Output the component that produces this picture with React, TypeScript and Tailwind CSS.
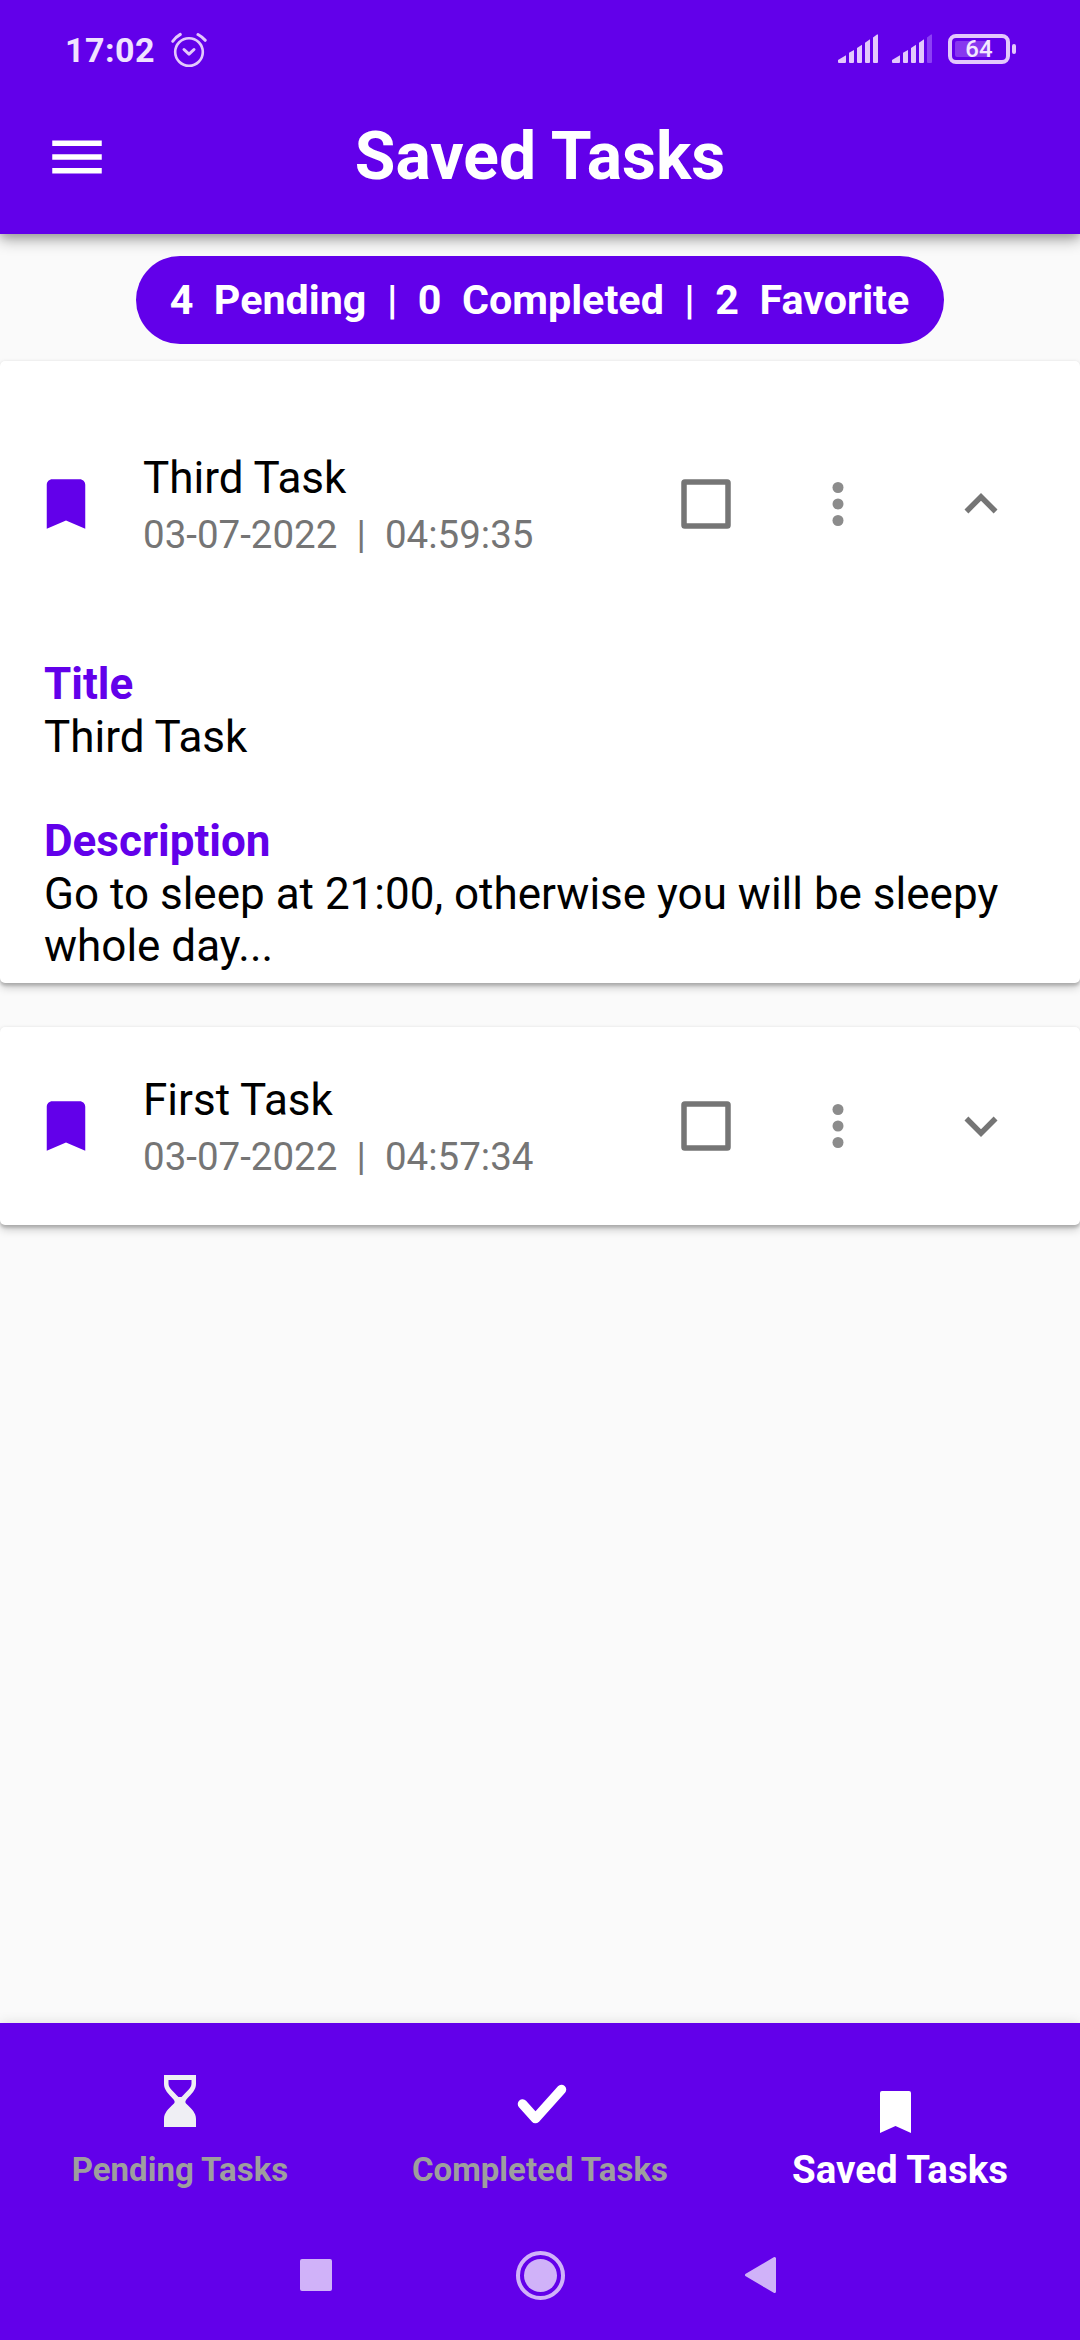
import React from "react";

function AlarmIcon() {
  return (
    <svg className="h-[36px] w-[36px]" viewBox="171 32 36 36" fill="none" stroke="#e3c8fc" strokeLinecap="round">
      <circle cx="189" cy="52" r="13.8" strokeWidth="2.6" />
      <path d="M184 49.5l5 4.7 5-4.7" strokeWidth="3" strokeLinejoin="round" />
      <path d="M172.8 41.3Q175.500 37.200 180.300 34.400M205.200 40.300Q202.500 37 198 34.500" strokeWidth="3" />
    </svg>
  );
}

function SignalIcon({ weak = false }: { weak?: boolean }) {
  return (
    <svg className="h-[29px] w-[40px]" viewBox="0 0 40 30" preserveAspectRatio="none" fill="#e3c8fc">
      <path d="M1 30Q0 30 0 29V27L8 22V29Q8 30 7 30z" />
      <path d="M11 19.500L16 16.500V29Q16 30 15 30H12Q11 30 11 29z" />
      <path d="M19 14.500L24 11V29Q24 30 23 30H20Q19 30 19 29z" />
      <path d="M27 9L32 5.500V29Q32 30 31 30H28Q27 30 27 29z" />
      <path d="M35 3.500L39 .5H40V29Q40 30 39 30H36Q35 30 35 29z" fill={weak ? "#8c40f5" : "#e3c8fc"} />
    </svg>
  );
}

function Battery() {
  return (
    <div className="flex items-center gap-[2px]">
      <div className="relative flex h-[30px] w-[62px] items-center justify-center rounded-[8px] border-[4px] border-[#e3c8fc]">
        <div className="absolute left-[3px] top-[3px] h-[16px] w-[35px] rounded-[2px] bg-[#8837ef]" />
        <span className="relative text-[24px] font-medium leading-none text-[#f3e8ff]">64</span>
      </div>
      <div className="h-[10px] w-[4px] rounded-[2px] bg-[#e3c8fc]" />
    </div>
  );
}

function Bookmark({ className }: { className: string }) {
  return (
    <svg className={className} viewBox="0 0 24 24" fill="currentColor">
      <path d="M17 3H7c-1.100 0-2 .9-2 2v16l7-3 7 3V5c0-1.100-.9-2-2-2z" />
    </svg>
  );
}

function TaskRow({ title, time, open = false }: { title: string; time: string; open?: boolean }) {
  return (
    <div className="flex h-[198px] items-center pl-[33px] pr-[66px]">
      <Bookmark className="h-[66px] w-[66px] text-[#6200ea]" />
      <div className="ml-[44px] flex flex-1 flex-col gap-[8px] whitespace-pre">
        <div className="text-[44px] leading-[52px] text-black">{title}</div>
        <div className="text-[38.500px] leading-[45px] text-[#757575]">{time}</div>
      </div>
      <svg className="h-[66px] w-[66px]" viewBox="0 0 24 24" fill="none" stroke="#757575" strokeWidth="2">
        <rect x="4" y="4" width="16" height="16" rx=".3" strokeLinejoin="round" />
      </svg>
      <svg className="ml-[66px] h-[66px] w-[66px]" viewBox="0 0 24 24" fill="#8c8c8c">
        <circle cx="12" cy="6" r="2" />
        <circle cx="12" cy="12" r="2" />
        <circle cx="12" cy="18" r="2" />
      </svg>
      <svg className="ml-[77px] h-[66px] w-[66px]" viewBox="0 0 24 24" fill="#757575">
        {open ? (
          <path d="M12 8l-6 6 1.410 1.410L12 10.830l4.590 4.580L18 14z" />
        ) : (
          <path d="M16.590 8.590L12 13.170 7.410 8.590 6 10l6 6 6-6z" />
        )}
      </svg>
    </div>
  );
}

const cardClass =
  "rounded-[5px] bg-white shadow-[0_3px_3px_rgba(0,0,0,0.16),0_5px_8px_rgba(0,0,0,0.18),0_0_3px_rgba(0,0,0,0.07)]";

export default function App() {
  return (
    <div className="flex h-[2340px] w-[1080px] flex-col overflow-hidden bg-[#fafafa] font-['Roboto',sans-serif]">
      <header className="relative z-10 h-[234px] shrink-0 bg-[#6200ea] shadow-[0_6px_14px_rgba(0,0,0,0.32),0_3px_8px_rgba(0,0,0,0.12)]">
        <div className="flex h-[100px] items-center pl-[65px] pr-[64px]">
          <span className="w-[90px] text-[34px] font-bold leading-[40px] tracking-[0.5px] text-[#f0e2ff]">17:02</span>
          <div className="ml-[16px]">
            <AlarmIcon />
          </div>
          <div className="mb-[2px] ml-auto flex items-start gap-[14px]">
            <SignalIcon />
            <SignalIcon weak />
            <div className="ml-[2px]">
              <Battery />
            </div>
          </div>
        </div>
        <div className="grid h-[114px] grid-cols-[1fr_auto_1fr] items-center">
          <svg className="ml-[44px] h-[66px] w-[66px]" viewBox="0 0 24 24" fill="white">
            <path d="M3 18h18v-2H3v2zm0-5h18v-2H3v2zm0-7v2h18V6H3z" />
          </svg>
          <h1 className="text-[66px] font-bold leading-[78px] text-white">Saved Tasks</h1>
        </div>
      </header>

      <main className="flex flex-1 flex-col pt-[22px]">
        <div className="flex h-[88px] w-[808px] items-center justify-center self-center rounded-full bg-[#6200ea] pr-[1px] whitespace-pre text-[41.250px] font-bold leading-[48px] text-white">
          {"4  Pending  |  0  Completed  |  2  Favorite"}
        </div>

        <section className={`mt-[17px] h-[622px] pt-[44px] ${cardClass}`}>
          <TaskRow title="Third Task" time="03-07-2022  |  04:59:35" open />
          <div className="px-[44px] pt-[55.400px] text-[44px] leading-[52.400px] text-black">
            <h2 className="font-bold text-[#6200ea]">Title</h2>
            <p>Third Task</p>
            <h2 className="mt-[52px] font-bold text-[#6200ea]">Description</h2>
            <p>Go to sleep at 21:00, otherwise you will be sleepy whole day...</p>
          </div>
        </section>

        <section className={`mt-[44px] ${cardClass}`}>
          <TaskRow title="First Task" time="03-07-2022  |  04:57:34" />
        </section>
      </main>

      <footer className="h-[317px] shrink-0 bg-[#6200ea] shadow-[0_0_12px_rgba(0,0,0,0.12)]">
        <nav className="grid h-[187px] grid-cols-3 text-[33px] font-bold leading-[39px] text-[#9e9e9e]">
          <div className="flex flex-col items-center pt-[52px]">
            <svg className="h-[52px] w-[32px]" viewBox="0 0 32 52" fill="#efeff4">
              <path
                fillRule="evenodd"
                d="M0 0H32V9C32 15 28 18 22 25Q20.500 27 22 28.500C28 34 32 38 32 44V52H0V44C0 38 4 34 10 28.500Q11.500 27 10 25C4 18 0 15 0 9zM4.500 5V8.500C4.500 13 9 16 14.500 22H17.500C23 16 27.500 13 27.500 8.500V5z"
              />
            </svg>
            <span className="mt-[23px]">Pending Tasks</span>
          </div>
          <div className="flex flex-col items-center pt-[61px]">
            <svg className="ml-[3px] h-[40px] w-[50px]" viewBox="0 0 50 40" fill="none" stroke="white" strokeWidth="9.500" strokeLinecap="round">
              <path d="M5.500 20L18.500 34.500L44.500 5.500" strokeLinejoin="round" />
            </svg>
            <span className="mt-[26px]">Completed Tasks</span>
          </div>
          <div className="flex flex-col items-center pt-[68px] text-white">
            <svg className="mr-[9px] h-[42px] w-[31px]" viewBox="0 0 31 42" fill="currentColor">
              <path d="M2 0H29Q31 0 31 2V42L15.500 35L0 42V2Q0 0 2 0z" />
            </svg>
            <span className="mt-[14px] text-[38.500px] leading-[45px]">Saved Tasks</span>
          </div>
        </nav>
        <div className="flex h-[130px] items-center pl-[300px]">
          <div className="h-[32px] w-[32px] rounded-[2px] bg-[#d0b2f9]" />
          <div className="ml-[184px] flex h-[49px] w-[49px] items-center justify-center rounded-full border-[4px] border-[#d0b2f9]">
            <div className="h-[33px] w-[33px] rounded-full bg-[#d0b2f9]" />
          </div>
          <svg className="ml-[179px] h-[38px] w-[33px]" viewBox="0 0 33 38" fill="#d0b2f9" stroke="#d0b2f9" strokeWidth="3" strokeLinejoin="round">
            <path d="M2.500 19L30.500 2.500V35.500z" />
          </svg>
        </div>
      </footer>
    </div>
  );
}
